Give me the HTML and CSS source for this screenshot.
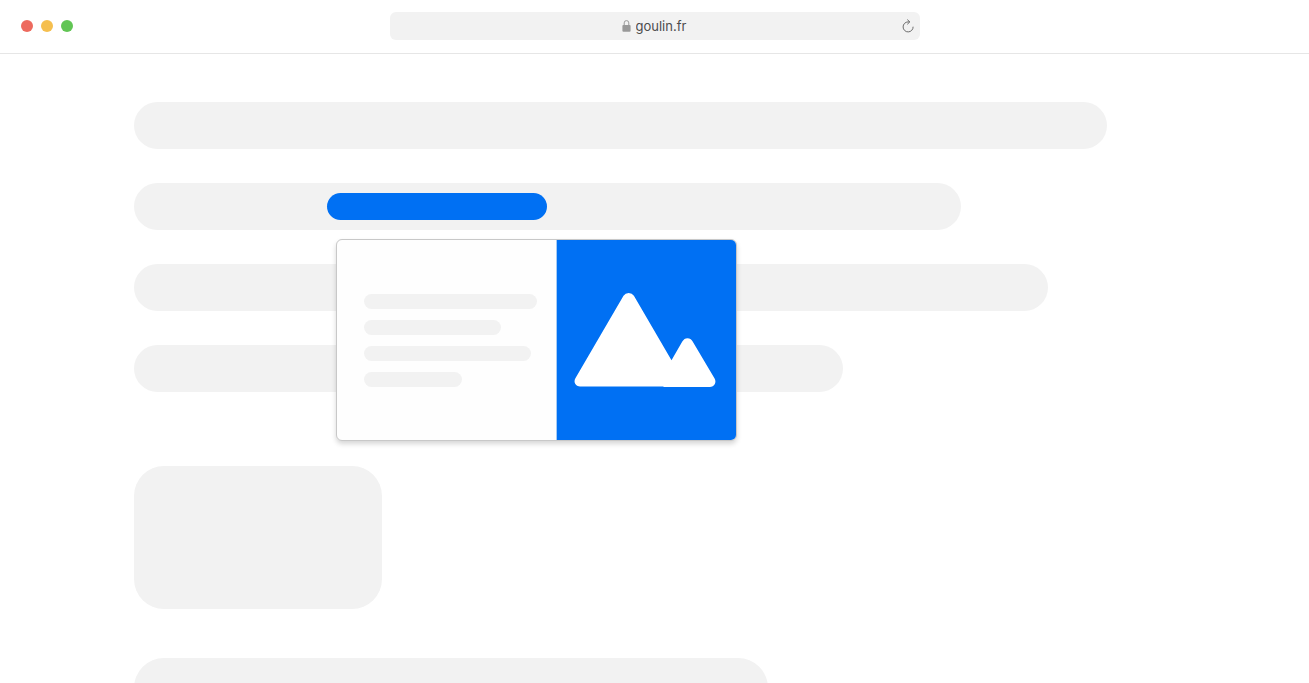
FILE: index.html
```html
<!DOCTYPE html>
<html lang="fr">
<head>
<meta charset="utf-8">
<meta name="viewport" content="width=device-width, initial-scale=1">
<title>goulin.fr</title>
<link rel="stylesheet" href="styles.css">
</head>
<body>
<header class="toolbar">
  <div class="window-controls">
    <button class="dot dot-close" type="button" aria-label="Fermer"></button>
    <button class="dot dot-minimize" type="button" aria-label="Réduire"></button>
    <button class="dot dot-expand" type="button" aria-label="Agrandir"></button>
  </div>
  <div class="address-bar">
    <label class="address">
      <svg class="lock" viewBox="0 0 9 12" aria-hidden="true">
        <path d="M2.2 6V2.9a2.3 2.3 0 0 1 4.6 0V6" fill="none" stroke="#999" stroke-width="1"/>
        <rect x="0.4" y="4.9" width="8.2" height="6.8" rx="1" fill="#999"/>
      </svg>
      <input class="url" type="text" value="goulin.fr" aria-label="Adresse" spellcheck="false">
    </label>
    <button class="reload" type="button" aria-label="Recharger">
      <svg viewBox="0 0 12 14" aria-hidden="true">
        <path d="M11.1 7.7A5 5 0 1 1 6.1 2.9h1.6M5.3.6l2.5 2.3-2.5 2.4" fill="none" stroke="#6c6c6c" stroke-width="1"/>
      </svg>
    </button>
  </div>
  <div></div>
</header>
<main class="page">
  <div class="line line-1"></div>
  <div class="line line-2">
    <div class="preview-anchor">
      <a class="link" href="#apercu" aria-label="Lien"></a>
      <article class="preview" id="apercu">
        <div class="summary">
          <div class="text text-1"></div>
          <div class="text text-2"></div>
          <div class="text text-3"></div>
          <div class="text text-4"></div>
        </div>
        <div class="thumbnail">
          <svg class="mountains" viewBox="574 292 142 96" aria-hidden="true">
            <path d="M623.5 295.8Q625.3 293 628.7 293Q632.1 293 633.9 295.8L671.5 360.3L682.3 341.6Q684.2 338.2 687.5 338.2Q690.8 338.2 692.5 341.3L714.6 378.6C716.8 382.4 714.3 387 710 387H664L663 386.4H580C575.4 386.4 573.2 382 575.4 378.2Z" fill="#fff"/>
          </svg>
        </div>
      </article>
    </div>
  </div>
  <div class="line line-3"></div>
  <div class="line line-4"></div>
  <div class="block block-small"></div>
  <div class="block block-wide"></div>
</main>
</body>
</html>
```
FILE: styles.css
```css
* {
  box-sizing: border-box;
}

body {
  display: flex;
  flex-direction: column;
  height: 100vh;
  margin: 0;
  overflow: hidden;
  background: #fff;
  font-family: Inter, "Liberation Sans", sans-serif;
}

button {
  padding: 0;
  border: 0;
}

.toolbar {
  display: grid;
  grid-template-columns: 1fr minmax(0, 530px) 1fr;
  flex: none;
  align-items: center;
  padding: 12px 0 13px;
  border-bottom: 1px solid #e6e6e6;
}

.window-controls {
  display: flex;
  gap: 8px;
  padding-left: 21px;
}

.dot {
  width: 12px;
  height: 12px;
  border-radius: 50%;
}

.dot-close {
  background: #ed6a5e;
}

.dot-minimize {
  background: #f5bf4f;
}

.dot-expand {
  background: #61c554;
}

.address-bar {
  display: grid;
  grid-template-columns: 24px 1fr 24px;
  align-items: center;
  height: 28px;
  border-radius: 6px;
  background: #f2f2f2;
}

.address {
  display: flex;
  grid-column: 2;
  align-items: center;
  justify-content: center;
  gap: 5px;
}

.lock {
  width: 9px;
  height: 12px;
}

.url {
  width: 52px;
  height: 20px;
  padding: 0;
  border: 0;
  outline: 0;
  background: transparent;
  color: #4c4c4c;
  font: 13px/20px Inter, "Liberation Sans", sans-serif;
}

.reload {
  display: flex;
  width: 24px;
  height: 24px;
  align-items: center;
  justify-content: center;
  background: transparent;
}

.reload svg {
  width: 12px;
  height: 14px;
}

.page {
  display: flex;
  flex: 1;
  flex-direction: column;
  gap: 34px;
  min-height: 0;
  padding: 48px 134px 0;
  overflow: hidden;
}

.line,
.block {
  flex: none;
  max-width: 100%;
  background: #f2f2f2;
}

.line {
  height: 47px;
  border-radius: 24px;
}

.line-1 {
  width: 973px;
}

.line-2 {
  width: 827px;
  padding: 10px 0 0 193px;
}

.line-3 {
  width: 914px;
}

.line-4 {
  width: 709px;
}

.block {
  height: 143px;
  border-radius: 30px;
}

.block-small {
  width: 248px;
  margin-top: 40px;
}

.block-wide {
  width: 634px;
  margin-top: 15px;
}

.preview-anchor {
  position: relative;
  width: 220px;
}

.link {
  display: block;
  height: 27px;
  border-radius: 14px;
  background: #0070f3;
}

.preview {
  position: absolute;
  z-index: 1;
  top: 46px;
  left: 9px;
  display: flex;
  width: 401px;
  height: 202px;
  overflow: hidden;
  border: 1px solid #c8c8c8;
  border-radius: 6px;
  background: #fefefe;
  box-shadow: 0 3px 5px rgba(0, 0, 0, 0.16);
}

.summary {
  display: flex;
  flex: 1;
  flex-direction: column;
  justify-content: center;
  gap: 11px;
  padding-left: 27px;
}

.text {
  height: 15px;
  border-radius: 8px;
  background: #f2f2f2;
}

.text-1 {
  width: 173px;
}

.text-2 {
  width: 137px;
}

.text-3 {
  width: 167px;
}

.text-4 {
  width: 98px;
}

.thumbnail {
  display: flex;
  flex: none;
  width: 180px;
  align-items: center;
  padding-left: 17px;
  border-left: 1px solid #a5cbf5;
  background: #0070f3;
}

.mountains {
  width: 142px;
  height: 96px;
}
```
